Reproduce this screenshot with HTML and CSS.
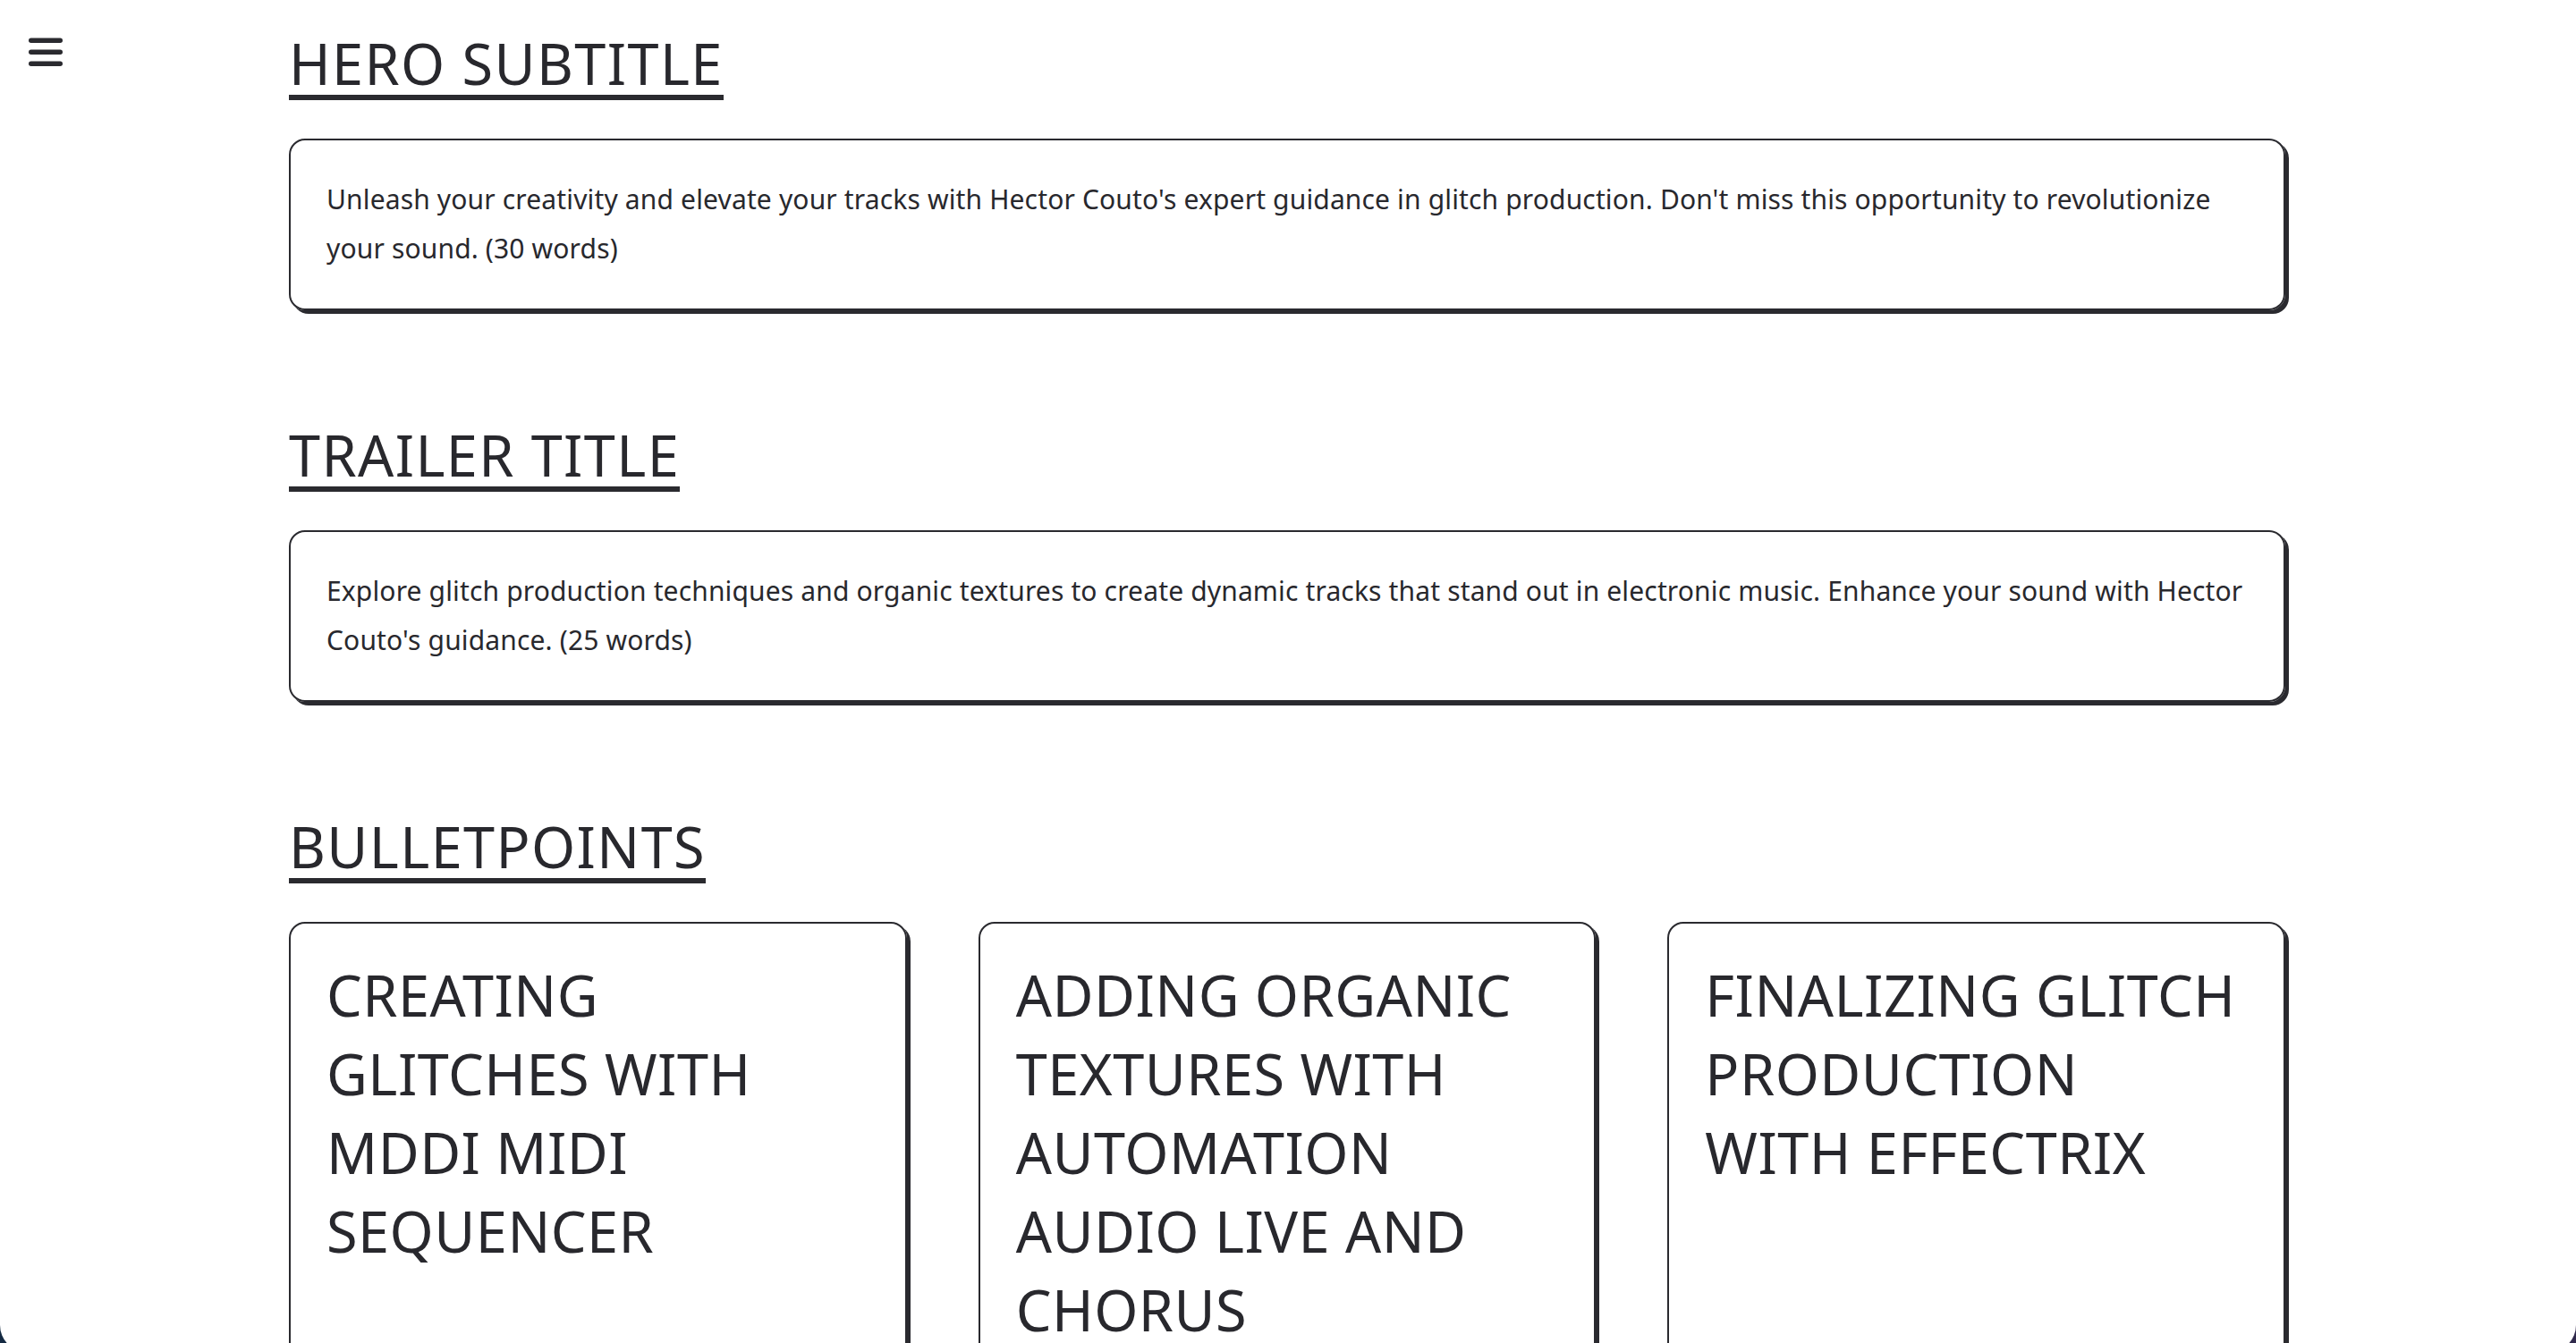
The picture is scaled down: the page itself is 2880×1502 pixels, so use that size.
FILE: index.html
```html
<!DOCTYPE html>
<html lang="en">
<head>
<meta charset="utf-8">
<title>Course page</title>
<link rel="stylesheet" href="styles.css">
</head>
<body>
<div class="window">
  <aside class="nav">
    <button class="menu-btn" aria-label="Menu">
      <svg width="38" height="32" viewBox="0 0 38 32" aria-hidden="true">
        <rect x="0" y="0.5" width="38" height="5.5" rx="2.75"/>
        <rect x="0" y="13.5" width="38" height="5.5" rx="2.75"/>
        <rect x="0" y="26.5" width="38" height="5.5" rx="2.75"/>
      </svg>
    </button>
  </aside>
  <main class="content">
    <section class="block">
      <h2 class="title"><span>HERO SUBTITLE</span></h2>
      <div class="panel">
        <p>Unleash your creativity and elevate your tracks with Hector Couto's expert guidance in glitch production. Don't miss this opportunity to revolutionize your sound. (30 words)</p>
      </div>
    </section>
    <section class="block">
      <h2 class="title"><span>TRAILER TITLE</span></h2>
      <div class="panel">
        <p>Explore glitch production techniques and organic textures to create dynamic tracks that stand out in electronic music. Enhance your sound with Hector Couto's guidance. (25 words)</p>
      </div>
    </section>
    <section class="block">
      <h2 class="title"><span>BULLETPOINTS</span></h2>
      <div class="cards">
        <div class="card"><p>CREATING GLITCHES WITH MDDI MIDI SEQUENCER</p></div>
        <div class="card"><p>ADDING ORGANIC TEXTURES WITH AUTOMATION AUDIO LIVE AND CHORUS</p></div>
        <div class="card card-balanced"><p>FINALIZING GLITCH PRODUCTION WITH EFFECTRIX</p></div>
      </div>
    </section>
  </main>
</div>
</body>
</html>
```
FILE: styles.css
```css
html, body {
  margin: 0;
  padding: 0;
  height: 100%;
  overflow: hidden;
}
body {
  background: linear-gradient(90deg, #142a42 0%, #24283f 50%, #302a4c 100%);
  font-family: "Noto Sans", "Open Sans", sans-serif;
  color: #28282d;
}
.window {
  background: #ffffff;
  height: calc(100vh + 10px);
  border-radius: 0 0 30px 30px;
  overflow: hidden;
  display: grid;
  grid-template-columns: 323px 2232px;
  align-items: start;
}
.nav {
  padding: 42px 0 0 32px;
}
.menu-btn {
  display: block;
  padding: 0;
  margin: 0;
  border: 0;
  background: none;
  line-height: 0;
  cursor: pointer;
}
.menu-btn svg {
  fill: #2a2a2f;
}
.content {
  padding-top: 36px;
}
.block {
  display: flex;
  flex-direction: column;
  margin-bottom: 127px;
}
.title {
  align-self: flex-start;
  margin: 0 0 43px;
  font-size: 63px;
  font-weight: 400;
  line-height: 70px;
  letter-spacing: 1.4px;
}
.title span {
  display: inline-block;
  border-bottom: 6px solid #2a2a2f;
}
.panel {
  border: 2px solid #2a2a2f;
  border-radius: 18px;
  box-shadow: 4px 4px 0 #2a2a2f;
  padding: 38px 40px 40px;
}
.panel p {
  margin: 0;
  font-size: 30px;
  line-height: 55px;
  letter-spacing: 0.15px;
}
.cards {
  display: grid;
  grid-template-columns: repeat(3, 1fr);
  gap: 80px;
}
.card {
  border: 2px solid #2a2a2f;
  border-radius: 18px;
  box-shadow: 4px 4px 0 #2a2a2f;
  padding: 36px 40px 40px;
}
.card p {
  margin: 0;
  font-size: 63px;
  line-height: 88px;
  letter-spacing: 0.5px;
}
.card-balanced p {
  text-wrap: balance;
}
```
